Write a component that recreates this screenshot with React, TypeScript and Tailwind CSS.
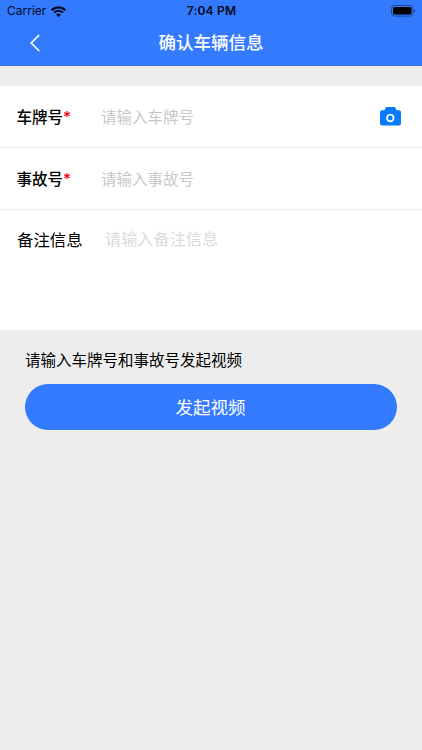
import React, { useState } from 'react';

interface FieldRowProps {
  label: string;
  placeholder: string;
  value: string;
  onChange: (value: string) => void;
  action?: React.ReactNode;
}

const WifiIcon: React.FC = () => (
  <svg className="w-[15px] h-[11px]" viewBox="0 0 15 11" fill="none" stroke="#03081a">
    <path d="M0.7 4.1a9.6 9.6 0 0 1 13.6 0" strokeWidth="2.3" />
    <path d="M3.1 6.6a6.2 6.2 0 0 1 8.8 0" strokeWidth="2" />
    <path d="M7.5 11 5.1 8.6a3.4 3.4 0 0 1 4.8 0z" fill="#03081a" stroke="none" />
  </svg>
);

const BatteryIcon: React.FC = () => (
  <svg className="w-[25px] h-[12px]" viewBox="0 0 25 12">
    <rect x="0.5" y="0.5" width="21.5" height="10.6" rx="3" fill="none" stroke="#1d4793" />
    <rect x="2" y="2" width="18.5" height="7.6" rx="1.6" fill="#000" />
    <path d="M23.2 4v3.8c1.5-.6 1.5-3.2 0-3.8z" fill="#1d4793" />
  </svg>
);

const BackIcon: React.FC = () => (
  <svg className="w-[10px] h-[18px]" viewBox="0 0 10 18" fill="none" stroke="#fff" strokeWidth="1.7">
    <path d="M9.2 1 1.2 9l8 8" />
  </svg>
);

const CameraIcon: React.FC = () => (
  <svg className="w-[21px] h-[19px]" viewBox="0 0 21 19">
    <path
      d="M2 3.2h2.4l1.100-2.100C5.900.3 6.300 0 7 0h7c.7 0 1.100.3 1.500 1.100l1.100 2.100H19a2 2 0 0 1 2 2v11.300a2 2 0 0 1-2 2H2a2 2 0 0 1-2-2V5.200a2 2 0 0 1 2-2z"
      fill="#077bfb"
    />
    <circle cx="10.3" cy="11" r="3.3" fill="none" stroke="#fff" strokeWidth="1.7" />
  </svg>
);

const FieldRow: React.FC<FieldRowProps> = ({ label, placeholder, value, onChange, action }) => {
  return (
    <div className="flex items-center h-[62px] pl-[16.5px] pr-[21px] border-b border-[#ebebeb]">
      <label className="w-[84.5px] pt-0.5 text-[15.5px] font-medium text-black whitespace-nowrap">
        {label}
        <span className="text-[#f5000f]">*</span>
      </label>
      <input
        className="flex-1 min-w-0 pt-0.5 text-[15.5px] text-black placeholder:text-[#c7c7cb] outline-none"
        placeholder={placeholder}
        value={value}
        onChange={(e) => onChange(e.target.value)}
      />
      {action}
    </div>
  );
};

const App: React.FC = () => {
  const [plate, setPlate] = useState('');
  const [accident, setAccident] = useState('');
  const [remark, setRemark] = useState('');

  return (
    <div className="h-[750px] overflow-hidden bg-[#ededed] font-['Inter','Noto_Sans_CJK_SC',sans-serif]">
      <header className="h-[66px] bg-[#347aff]">
        <div className="grid grid-cols-3 items-center h-[22px] pl-[7px] pr-[6px] text-[#03081a]">
          <div className="flex items-center gap-[5px] text-[12px]">
            <span>Carrier</span>
            <WifiIcon />
          </div>
          <div className="text-center text-[12px] font-semibold tracking-[0.2px]">7:04 PM</div>
          <div className="flex justify-end">
            <BatteryIcon />
          </div>
        </div>
        <div className="grid grid-cols-[60px_1fr_60px] items-center h-[42px]">
          <button className="pl-[30px]" aria-label="返回">
            <BackIcon />
          </button>
          <h1 className="pt-px text-center text-[17.5px] font-medium text-white">确认车辆信息</h1>
        </div>
      </header>

      <main className="pt-5">
        <section className="h-[244px] bg-white">
          <FieldRow
            label="车牌号"
            placeholder="请输入车牌号"
            value={plate}
            onChange={setPlate}
            action={
              <button aria-label="拍照">
                <CameraIcon />
              </button>
            }
          />
          <FieldRow label="事故号" placeholder="请输入事故号" value={accident} onChange={setAccident} />
          <div className="flex items-start pl-[17px] pr-4 pt-[18px] text-[16.4px] leading-6">
            <label className="w-[88px] text-black">备注信息</label>
            <textarea
              className="flex-1 h-[88px] -mt-px resize-none text-[16.2px] text-black placeholder:text-[#dadada] outline-none"
              placeholder="请输入备注信息"
              value={remark}
              onChange={(e) => setRemark(e.target.value)}
            />
          </div>
        </section>

        <section className="px-[25px] pt-[19px]">
          <p className="text-[15.5px] leading-6 text-black">请输入车牌号和事故号发起视频</p>
          <button className="mt-[11px] w-full h-[46px] pt-0.5 pr-px rounded-full bg-[#347aff] text-[17.5px] text-white">
            发起视频
          </button>
        </section>
      </main>
    </div>
  );
};

export default App;
